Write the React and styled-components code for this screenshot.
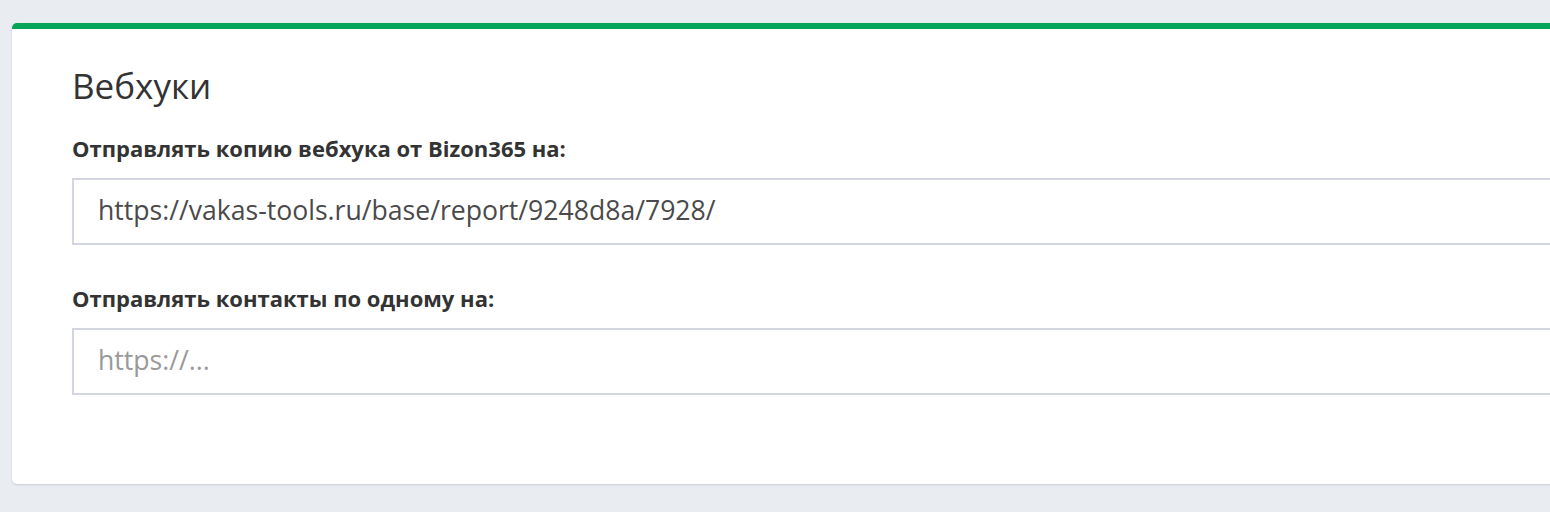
import React from 'react'
import styled, { createGlobalStyle } from 'styled-components'

const Global = createGlobalStyle`
  html, body {
    margin: 0;
    padding: 0;
    background: #e9ecf1;
    overflow: hidden;
  }
  body {
    font-family: "Open Sans", "Noto Sans", sans-serif;
    color: #333;
  }
`

const Page = styled.div`
  padding: 23px 0 0 12px;
  height: 512px;
  box-sizing: border-box;
`

const Card = styled.section`
  width: 1600px;
  background: #fff;
  border-top: 6px solid #05a55a;
  border-radius: 5px;
  box-shadow: 0 1px 2px rgba(60, 70, 100, 0.18);
  padding: 33px 0 89px 60px;
  box-sizing: border-box;
`

const Title = styled.h2`
  margin: 0 0 23px;
  font-size: 35px;
  font-weight: 400;
  line-height: 48px;
  color: #333;
`

const Field = styled.div`
  display: flex;
  flex-direction: column;
  gap: 15px;
  & + & {
    margin-top: 38px;
  }
`

const Label = styled.label`
  font-size: 22px;
  font-weight: 700;
  line-height: 30px;
  color: #333;
`

const Input = styled.input`
  display: block;
  width: 100%;
  height: 67px;
  box-sizing: border-box;
  border: 2px solid #d3d6de;
  border-radius: 0;
  padding: 0 24px 4px;
  font-family: inherit;
  font-size: 26.6px;
  color: #4a4a4a;
  background: #fff;
  outline: none;
  &::placeholder {
    color: #999;
  }
`

const fields = [
  { label: 'Отправлять копию вебхука от Bizon365 на:', value: 'https://vakas-tools.ru/base/report/9248d8a/7928/' },
  { label: 'Отправлять контакты по одному на:', value: '' },
]

export default function App() {
  return (
    <>
      <Global />
      <Page>
        <Card>
          <Title>Вебхуки</Title>
          {fields.map((f, i) => (
            <Field key={i}>
              <Label>{f.label}</Label>
              <Input defaultValue={f.value} placeholder="https://..." />
            </Field>
          ))}
        </Card>
      </Page>
    </>
  )
}
